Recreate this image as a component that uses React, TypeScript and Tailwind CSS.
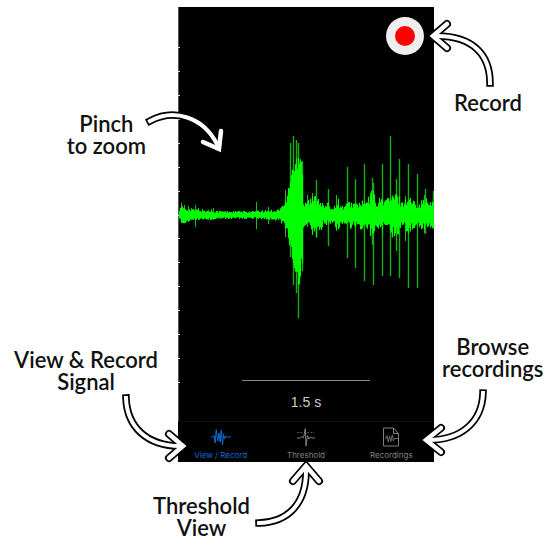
import React from "react";

type Sample = [x: number, up: number, down: number];

// Key points of the solid body of the signal, interpolated between entries.
const envelope: Sample[] = [
  [1, 6, 6], [3, 9, 9], [7, 8, 8], [12, 6, 6], [20, 6, 6], [30, 5, 5], [50, 4, 4],
  [75, 4, 4], [90, 5, 5], [100, 6, 6], [104, 10, 9], [108, 18, 16], [111, 34, 30],
  [114, 50, 48], [117, 55, 74], [120, 68, 80], [122, 72, 60], [124, 50, 58], [125, 14, 13],
  [128, 17, 12], [132, 17, 16], [136, 20, 22], [141, 20, 22], [145, 10, 10], [150, 12, 10],
  [155, 8, 7], [159, 18, 17], [163, 9, 9], [168, 12, 11], [173, 14, 14], [177, 12, 12],
  [182, 14, 15], [188, 14, 13], [194, 26, 24], [199, 15, 18], [203, 18, 14], [208, 18, 14],
  [213, 20, 22], [219, 22, 22], [224, 14, 12], [230, 20, 18], [236, 14, 14], [241, 14, 13],
  [247, 17, 17], [252, 13, 12], [256, 14, 15],
];

const spikes: Sample[] = [
  [3, 12, 8], [6, 10, 8], [10, 9, 7], [13, 7, 5], [17, 10, 12], [20, 7, 5], [33, 6, 5],
  [35, 7, 5], [78, 13, 14], [90, 8, 9], [107, 25, 22], [129, 20, 12], [134, 22, 20],
  [158, 20, 16], [192, 22, 19], [204, 24, 20], [227, 19, 26], [246, 20, 18],
];

const thinSpikes: Sample[] = [
  [112, 72, 42], [115, 79, 70], [118, 75, 78], [120, 72, 103], [124, 54, 56],
  [138, 35, 22], [150, 26, 31], [169, 48, 43], [177, 36, 53], [186, 51, 66],
  [194, 37, 30], [195, 32, 70], [204, 51, 61], [212, 79, 61], [218, 36, 36],
  [221, 56, 63], [230, 51, 73], [239, 41, 73], [247, 26, 19], [255, 24, 14],
];

const BASELINE = 208;

function noise(n: number): number {
  const v = Math.sin(n * 127.1) * 43758.5453;
  return v - Math.floor(v);
}

function bodyPath(): string {
  let d = "";
  for (let x = 1; x < 256; x++) {
    let i = 0;
    while (i < envelope.length - 2 && envelope[i + 1][0] < x) i++;
    const [x0, u0, d0] = envelope[i];
    const [x1, u1, d1] = envelope[i + 1];
    const t = Math.min(1, Math.max(0, (x - x0) / (x1 - x0)));
    const inBurst = x > 109 && x < 125;
    const floor = inBurst ? 0.7 : 0.5;
    const up = (u0 + (u1 - u0) * t) * (floor + (1.05 - floor) * noise(x));
    const down = (d0 + (d1 - d0) * t) * (floor + (1.05 - floor) * noise(x + 500));
    d += `M${x + 0.5} ${(BASELINE - up).toFixed(1)}V${(BASELINE + down).toFixed(1)}`;
  }
  return d;
}

const linesPath = (list: Sample[]) =>
  list.map(([x, up, down]) => `M${x + 0.5} ${BASELINE - up}V${BASELINE + down}`).join("");

const ticks = Array.from({ length: 15 }, (_, i) => 40 + Math.round(i * 23.93));

function Waveform() {
  return (
    <svg className="absolute inset-0 size-full" viewBox="0 0 256 414" role="img" aria-label="Signal waveform">
      <path d="M0.5 0V414" stroke="#555" />
      <path d={ticks.map((y) => `M0 ${y + 0.5}H2`).join("")} stroke="#ddd" />
      <path d={linesPath(thinSpikes)} stroke="#12b012" strokeWidth="1.4" />
      <path d={linesPath(spikes)} stroke="#08c808" />
      <path d={bodyPath()} stroke="#00ff00" strokeWidth="1.2" />
    </svg>
  );
}

function SignalIcon() {
  return (
    <svg className="h-5 w-5" viewBox="0 0 20 20" fill="none" stroke="currentColor" strokeWidth="1" strokeLinejoin="round">
      <path d="M0 10H2L3 8.500L4.200 16L5.200 2.500L6.800 14L8 6L9.200 15L10.200 3L11.500 18L12.500 7L13.500 12L14.500 9L15.500 10H20" />
    </svg>
  );
}

function ThresholdIcon() {
  return (
    <svg className="h-5 w-5" viewBox="0 0 20 20" fill="none" stroke="currentColor" strokeWidth="1" strokeLinejoin="round">
      <path d="M1 5.500H19" strokeWidth="0.8" strokeDasharray="1.500 2" />
      <path d="M1 11H4.500L6 9.500L7.500 11L9.300 1.500L10 19L11.500 8.500L13 12L14.500 10L16 11H19" />
    </svg>
  );
}

function RecordingsIcon() {
  return (
    <svg className="h-5 w-5" viewBox="0 0 20 20" fill="none" stroke="currentColor" strokeWidth="1" strokeLinejoin="round">
      <path d="M2.500 1H12.500L17.500 6.500V19H2.500ZM12.500 1V6.500H17.500" />
      <path d="M4 11.500H5L6 8.500L7.300 15L8.600 9L9.900 14.500L11.200 8L12.400 14L13.400 11.500H17" strokeWidth="0.8" />
    </svg>
  );
}

// Arrow coordinates are relative to the top left corner of the phone screen.
const arrows = [
  { shaft: "M-28 114C-4 101 25 110 39 137", head: "M25 135L41 142L43 124" },
  { shaft: "M312 76C312 48 295 29 259 29", head: "M269 17L255 29L269 41" },
  { shaft: "M-52 391C-51 420 -31 439 2 439", head: "M-9 427L5 439L-9 451" },
  { shaft: "M305 386C304 416 282 433 251 433", head: "M263 421L248 433L263 445" },
  { shaft: "M81 516C111 515 128 496 128 464", head: "M115 474L128 459L141 474" },
];

function Arrows() {
  return (
    <svg className="pointer-events-none absolute top-0 left-0 overflow-visible" width="256" height="455" fill="none" aria-hidden="true">
      {arrows.map(({ shaft, head }) => (
        <g key={shaft}>
          <path d={shaft} stroke="#000" strokeWidth="7.500" strokeLinecap="square" />
          <path d={head} stroke="#000" strokeWidth="8" strokeLinecap="round" />
          <path d={shaft} stroke="#fff" strokeWidth="4" strokeLinecap="square" />
          <path d={head} stroke="#fff" strokeWidth="4.500" strokeLinecap="round" />
        </g>
      ))}
    </svg>
  );
}

const tabs = [
  { label: "View / Record", Icon: SignalIcon, color: "text-[#0d6ad8]" },
  { label: "Threshold", Icon: ThresholdIcon, color: "text-[#808080]" },
  { label: "Recordings", Icon: RecordingsIcon, color: "text-[#808080]" },
];

function Phone() {
  return (
    <section className="relative bg-black" aria-label="App screen">
      <div className="relative flex h-[414px] flex-col">
        <Waveform />
        <div className="relative flex justify-end p-[10px]">
          <button aria-label="Record" className="flex size-[38px] items-center justify-center rounded-full bg-[#eee]">
            <span className="size-5 rounded-full bg-[#ff0000]" />
          </button>
        </div>
        <div className="relative mt-auto flex flex-col items-center gap-3 pb-[10px]">
          <div className="h-px w-32 bg-[#888]" />
          <p className="font-['Liberation_Sans',sans-serif] text-[14px] leading-[18px] text-[#ccc]">1.5 s</p>
        </div>
      </div>
      <nav className="grid h-[41px] grid-cols-3 border-t border-[#111] font-['Inter',sans-serif]">
        {tabs.map(({ label, Icon, color }) => (
          <button key={label} className={`flex flex-col items-center gap-[3px] pt-[5px] text-[8px] leading-[10px] whitespace-nowrap ${color}`}>
            <Icon />
            {label}
          </button>
        ))}
      </nav>
      <Arrows />
    </section>
  );
}

function Note({ children }: { children: React.ReactNode }) {
  return <p className="text-center text-[22px] leading-[22px] font-semibold whitespace-nowrap">{children}</p>;
}

export default function App() {
  return (
    <main className="grid min-h-screen grid-cols-[178fr_256px_123fr] content-start bg-white pt-[7px] font-['Lato',sans-serif] text-[#111]">
      <div className="flex flex-col items-end gap-[192px] pt-[106px]">
        <div className="pr-8">
          <Note>Pinch<br />to zoom</Note>
        </div>
        <div className="pr-5">
          <Note>View &amp; Record<br />Signal</Note>
        </div>
      </div>
      <Phone />
      <div className="flex flex-col items-start gap-[222px] pt-[85px]">
        <div className="pl-5">
          <Note>Record</Note>
        </div>
        <div className="pl-2">
          <Note>Browse<br />recordings</Note>
        </div>
      </div>
      <div className="col-start-2 -ml-[25px] flex justify-start pt-[33px]">
        <Note>Threshold<br />View</Note>
      </div>
    </main>
  );
}
